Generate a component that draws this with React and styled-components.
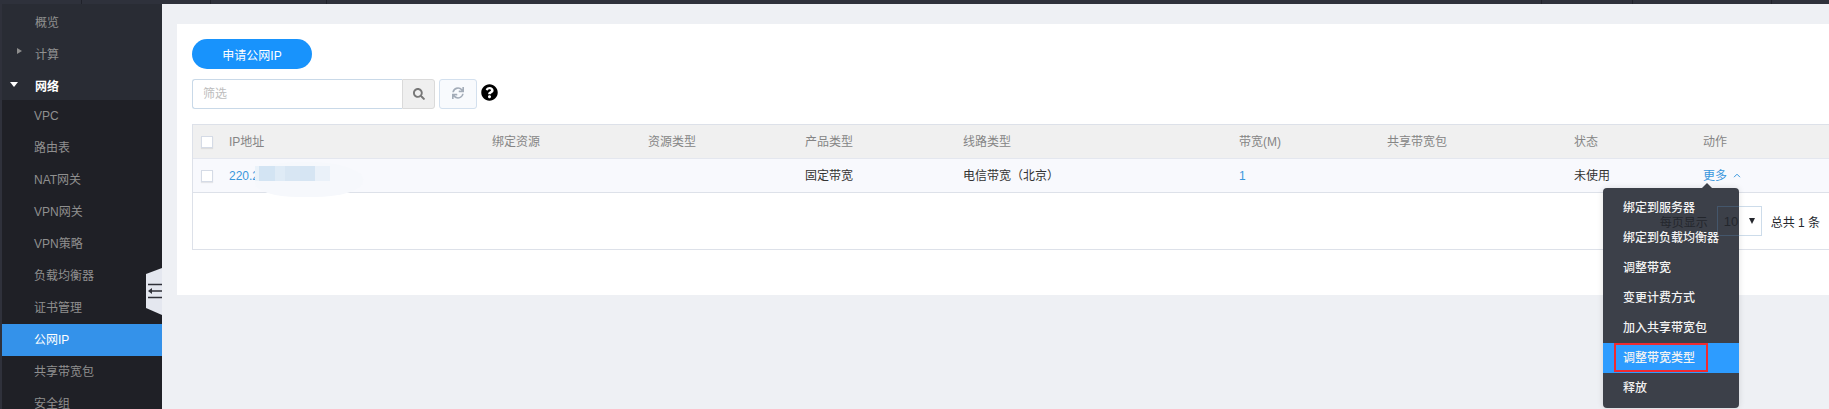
import React from 'react'
import styled, { createGlobalStyle } from 'styled-components'
import { FaSearch, FaSync, FaQuestionCircle } from 'react-icons/fa'

const GlobalStyle = createGlobalStyle`
  html, body {
    margin: 0;
    padding: 0;
    background: #eef0f4;
  }
  * {
    box-sizing: border-box;
  }
  body {
    font-family: "Liberation Sans", "Noto Sans CJK SC", sans-serif;
    font-size: 12px;
    color: #333;
  }
`

const COLUMNS = '36px 263px 156px 157px 158px 276px 148px 187px 129px 1fr'

const Page = styled.div`
  width: 1829px;
  height: 409px;
  display: flex;
  flex-direction: column;
  overflow: hidden;
`

const TopBar = styled.div`
  height: 4px;
  flex: none;
  display: flex;
  background: #2e313b;
`

const TopTab = styled.div`
  width: ${(p) => p.$w}px;
  border-right: 1px solid #20222a;
`

const Body = styled.div`
  flex: 1;
  display: flex;
  min-height: 0;
`

const Sidebar = styled.nav`
  width: 162px;
  flex: none;
  position: relative;
  overflow: hidden;
  background: #1f2026;
  border-left: 2px solid #2f313b;
`

const ParentItem = styled.div`
  height: 32px;
  line-height: 38px;
  padding-left: 33px;
  position: relative;
  background: #292c34;
  color: ${(p) => (p.$open ? '#fff' : '#909090')};
  font-weight: ${(p) => (p.$open ? 600 : 400)};
`

const CaretRight = styled.i`
  position: absolute;
  left: 15px;
  top: 12px;
  border-left: 5px solid #8d8d8d;
  border-top: 3.5px solid transparent;
  border-bottom: 3.5px solid transparent;
`

const CaretDown = styled.i`
  position: absolute;
  left: 8px;
  top: 14px;
  border-top: 5px solid #fff;
  border-left: 4px solid transparent;
  border-right: 4px solid transparent;
`

const ChildItem = styled.div`
  height: 32px;
  line-height: 32px;
  padding-left: 32px;
  color: ${(p) => (p.$active ? '#fff' : '#8f8f8f')};
  background: ${(p) => (p.$active ? '#3492ea' : 'transparent')};
`

const CollapseHandle = styled.div`
  position: absolute;
  right: 0;
  top: 264px;
  width: 16px;
  height: 48px;
  background: #e4e7ef;
  clip-path: polygon(0 6px, 100% 0, 100% 47px, 0 40px);
  display: flex;
  align-items: center;
`

const Main = styled.main`
  flex: 1;
  min-width: 0;
  padding: 20px 0 0 15px;
  background: #eef0f4;
`

const Card = styled.section`
  height: 271px;
  padding: 15px 0 0 15px;
  background: #fff;
`

const ApplyButton = styled.button`
  display: block;
  width: 120px;
  height: 30px;
  padding: 0;
  border: 0;
  border-radius: 15px;
  background: #1893fc;
  color: #fff;
  font: inherit;
`

const Toolbar = styled.div`
  display: flex;
  align-items: center;
  margin-top: 10px;
  height: 30px;
`

const FilterInput = styled.div`
  width: 210px;
  height: 30px;
  line-height: 28px;
  padding-left: 10px;
  background: #fff;
  color: #bdbdbd;
  border: 1px solid #c9d9e8;
  border-right: 0;
  border-radius: 3px 0 0 3px;
`

const SearchButton = styled.div`
  width: 33px;
  height: 30px;
  display: flex;
  align-items: center;
  justify-content: center;
  background: #efefef;
  color: #777;
  font-size: 12px;
  border: 1px solid #dadada;
  border-radius: 0 3px 3px 0;
`

const RefreshButton = styled.div`
  width: 38px;
  height: 30px;
  margin-left: 4px;
  padding-bottom: 2px;
  display: flex;
  align-items: center;
  justify-content: center;
  background: #f8fafd;
  color: #a3acb8;
  font-size: 12px;
  border: 1px solid #d3e0ee;
  border-radius: 3px;
`

const HelpIcon = styled.div`
  margin-left: 4px;
  margin-top: -3px;
  display: flex;
  color: #000;
  font-size: 17px;
`

const Table = styled.div`
  margin-top: 15px;
  height: 126px;
  border-top: 1px solid #dde1e9;
  border-bottom: 1px solid #dde1e9;
  border-left: 1px solid #dde1e9;
`

const HeadRow = styled.div`
  display: grid;
  grid-template-columns: ${COLUMNS};
  height: 34px;
  align-items: center;
  background: #f0f0f0;
  color: #858585;
  border-bottom: 1px solid #e4e7ef;
`

const DataRow = styled.div`
  display: grid;
  grid-template-columns: ${COLUMNS};
  height: 34px;
  align-items: center;
  background: #f8f9fd;
  border-bottom: 1px solid #dde1e9;
`

const Cell = styled.div`
  position: relative;
  line-height: 16px;
  color: ${(p) => (p.$link ? '#3a97dc' : 'inherit')};
`

const CheckBox = styled.span`
  display: block;
  width: 12px;
  height: 12px;
  margin-left: 8px;
  background: #fff;
  border: 1px solid #d5dbe6;
  box-shadow: 0 1px 1px rgba(0, 0, 0, 0.08);
`

const Smudge = styled.span`
  position: absolute;
  left: 26px;
  top: -6px;
  width: 108px;
  height: 35px;
  background: #f6f8fc;
  border-radius: 40% 50% 45% 40%;
`

const BlurBlocks = styled.span`
  position: absolute;
  left: 26px;
  top: -2px;
  width: 75px;
  height: 15px;
  background: linear-gradient(
    90deg,
    #eaf2f9 0 4px,
    #d3e4f3 4px 20px,
    #dfebf6 20px 30px,
    #d8e6f3 30px 45px,
    #d6e5f3 45px 60px,
    #eaf1f9 60px 75px
  );
`

const More = styled.span`
  display: inline-flex;
  align-items: center;
  gap: 6px;
`

const MoreChevron = styled.svg`
  width: 8px;
  height: 5px;
`

const Menu = styled.ul`
  position: absolute;
  left: -100px;
  top: 20px;
  z-index: 1;
  width: 136px;
  margin: 0;
  padding: 5px 0;
  list-style: none;
  background: #3c4049;
  border-radius: 4px;
  box-shadow: 0 0 6px rgba(0, 0, 0, 0.12);

  &::before {
    content: '';
    position: absolute;
    left: 99px;
    top: -5px;
    border-bottom: 5px solid #3c4049;
    border-left: 5px solid transparent;
    border-right: 5px solid transparent;
  }
`

const MenuItem = styled.li`
  position: relative;
  height: 30px;
  line-height: 30px;
  padding-left: 20px;
  color: #f2f2f2;
  font-weight: 500;
  background: ${(p) => (p.$active ? '#2d9cff' : 'transparent')};
`

const RedMark = styled.span`
  position: absolute;
  left: 11px;
  top: 0;
  width: 94px;
  height: 29px;
  border: 2px solid #ef2b30;
`

const Footer = styled.div`
  position: relative;
  z-index: 2;
  display: flex;
  justify-content: flex-end;
  align-items: center;
  gap: 9px;
  padding: 13px 9px 0 0;
  color: #24272d;
`

const SizeSelect = styled.div`
  width: 45px;
  height: 30px;
  display: flex;
  align-items: center;
  justify-content: space-between;
  padding: 0 6px;
  border: 1px solid rgba(90, 140, 185, 0.3);
  font-size: 13px;
  color: #24272d;
`

const SelectArrow = styled.i`
  border-top: 6px solid #24272d;
  border-left: 3.5px solid transparent;
  border-right: 3.5px solid transparent;
`

const topTabs = [82, 129, 116, 1215, 91, 139]
const network = ['VPC', '路由表', 'NAT网关', 'VPN网关', 'VPN策略', '负载均衡器', '证书管理', '公网IP', '共享带宽包', '安全组']
const headers = ['IP地址', '绑定资源', '资源类型', '产品类型', '线路类型', '带宽(M)', '共享带宽包', '状态', '动作']
const actions = ['绑定到服务器', '绑定到负载均衡器', '调整带宽', '变更计费方式', '加入共享带宽包', '调整带宽类型', '释放']

function App() {
  return (
    <Page>
      <GlobalStyle />
      <TopBar>
        {topTabs.map((w, i) => (
          <TopTab key={i} $w={w} />
        ))}
      </TopBar>
      <Body>
        <Sidebar>
          <ParentItem>概览</ParentItem>
          <ParentItem>
            <CaretRight />
            计算
          </ParentItem>
          <ParentItem $open>
            <CaretDown />
            网络
          </ParentItem>
          {network.map((name) => (
            <ChildItem key={name} $active={name === '公网IP'}>
              {name}
            </ChildItem>
          ))}
          <CollapseHandle>
            <svg width="16" height="18" viewBox="0 0 16 18">
              <path d="M2 1.5h14M6 8h10M2 14.5h14" stroke="#2f3038" strokeWidth="1.6" fill="none" />
              <path d="M2 8l4-3v6z" fill="#2f3038" />
            </svg>
          </CollapseHandle>
        </Sidebar>
        <Main>
          <Card>
            <ApplyButton>申请公网IP</ApplyButton>
            <Toolbar>
              <FilterInput>筛选</FilterInput>
              <SearchButton>
                <FaSearch />
              </SearchButton>
              <RefreshButton>
                <FaSync />
              </RefreshButton>
              <HelpIcon>
                <FaQuestionCircle />
              </HelpIcon>
            </Toolbar>
            <Table>
              <HeadRow>
                <CheckBox />
                {headers.map((h) => (
                  <Cell key={h}>{h}</Cell>
                ))}
              </HeadRow>
              <DataRow>
                <CheckBox />
                <Cell $link>
                  220.2
                  <Smudge />
                  <BlurBlocks />
                </Cell>
                <Cell />
                <Cell />
                <Cell>固定带宽</Cell>
                <Cell>电信带宽（北京）</Cell>
                <Cell $link>1</Cell>
                <Cell />
                <Cell>未使用</Cell>
                <Cell $link>
                  <More>
                    更多
                    <MoreChevron viewBox="0 0 8 5">
                      <path d="M1 4.2L4 1.2l3 3" stroke="#3a97dc" strokeWidth="1" fill="none" />
                    </MoreChevron>
                  </More>
                  <Menu>
                    {actions.map((a) => (
                      <MenuItem key={a} $active={a === '调整带宽类型'}>
                        {a === '调整带宽类型' && <RedMark />}
                        {a}
                      </MenuItem>
                    ))}
                  </Menu>
                </Cell>
              </DataRow>
              <Footer>
                <span>每页显示</span>
                <SizeSelect>
                  10
                  <SelectArrow />
                </SizeSelect>
                <span>总共 1 条</span>
              </Footer>
            </Table>
          </Card>
        </Main>
      </Body>
    </Page>
  )
}

export default App
